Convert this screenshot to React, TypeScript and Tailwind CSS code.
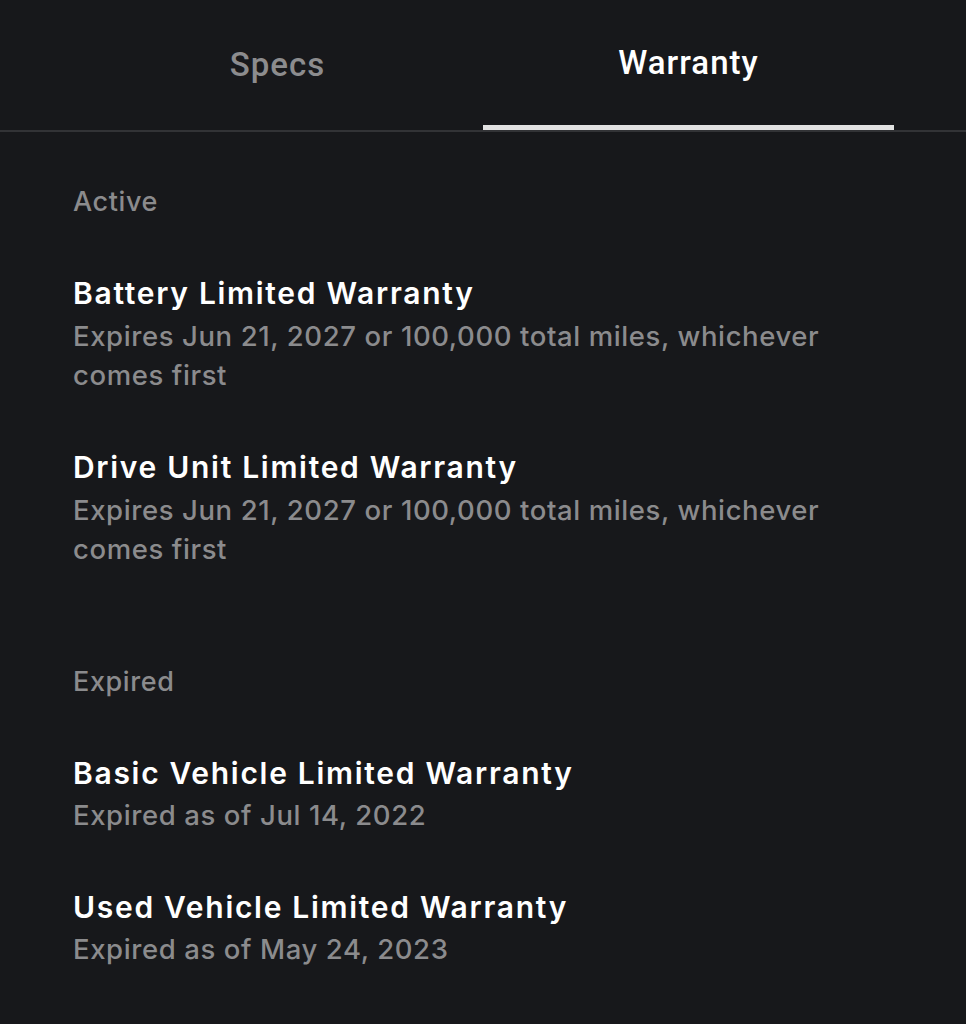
export default function App() {
  const active = [
    { title: "Battery Limited Warranty", detail: "Expires Jun 21, 2027 or 100,000 total miles, whichever comes first" },
    { title: "Drive Unit Limited Warranty", detail: "Expires Jun 21, 2027 or 100,000 total miles, whichever comes first" },
  ];
  const expired = [
    { title: "Basic Vehicle Limited Warranty", detail: "Expired as of Jul 14, 2022" },
    { title: "Used Vehicle Limited Warranty", detail: "Expired as of May 24, 2023" },
  ];

  return (
    <div className="min-h-screen w-full bg-[#17181b] font-['Inter',sans-serif] antialiased">
      {/* Tabs */}
      <div className="border-b-2 border-[#323336]">
        <div className="flex px-[72px]">
          <button className="flex-1 h-[130px] flex items-center justify-center text-[33px] font-medium tracking-[1px] text-[#8c8c8e] font-['Roboto',sans-serif]">
            Specs
          </button>
          <button className="flex-1 h-[130px] flex items-center justify-center text-[33px] font-medium tracking-[1px] text-white font-['Roboto',sans-serif] border-b-[5px] border-[#e2e2e2]">
            Warranty
          </button>
        </div>
      </div>

      <div className="pl-[73px] pr-[72px]">
        <h4 className="mt-[52px] text-[27px] font-medium leading-[36px] tracking-[0.6px] text-[#8b8b8d]">Active</h4>
        <div className="mt-[53px] flex flex-col gap-[52px]">
          {active.map((w) => (
            <div key={w.title}>
              <div className="text-[30px] font-semibold leading-[40px] tracking-[1.7px] text-white">{w.title}</div>
              <div className="mt-[4px] max-w-[800px] text-[27.5px] font-medium leading-[39px] tracking-[0.6px] text-[#8b8b8d]">{w.detail}</div>
            </div>
          ))}
        </div>

        <h4 className="mt-[95px] text-[27px] font-medium leading-[36px] tracking-[0.6px] text-[#8b8b8d]">Expired</h4>
        <div className="mt-[53px] flex flex-col gap-[52px]">
          {expired.map((w) => (
            <div key={w.title}>
              <div className="text-[30px] font-semibold leading-[40px] tracking-[1.7px] text-white">{w.title}</div>
              <div className="mt-[3px] text-[27.5px] font-medium leading-[39px] tracking-[0.6px] text-[#8b8b8d]">{w.detail}</div>
            </div>
          ))}
        </div>
      </div>
    </div>
  );
}
